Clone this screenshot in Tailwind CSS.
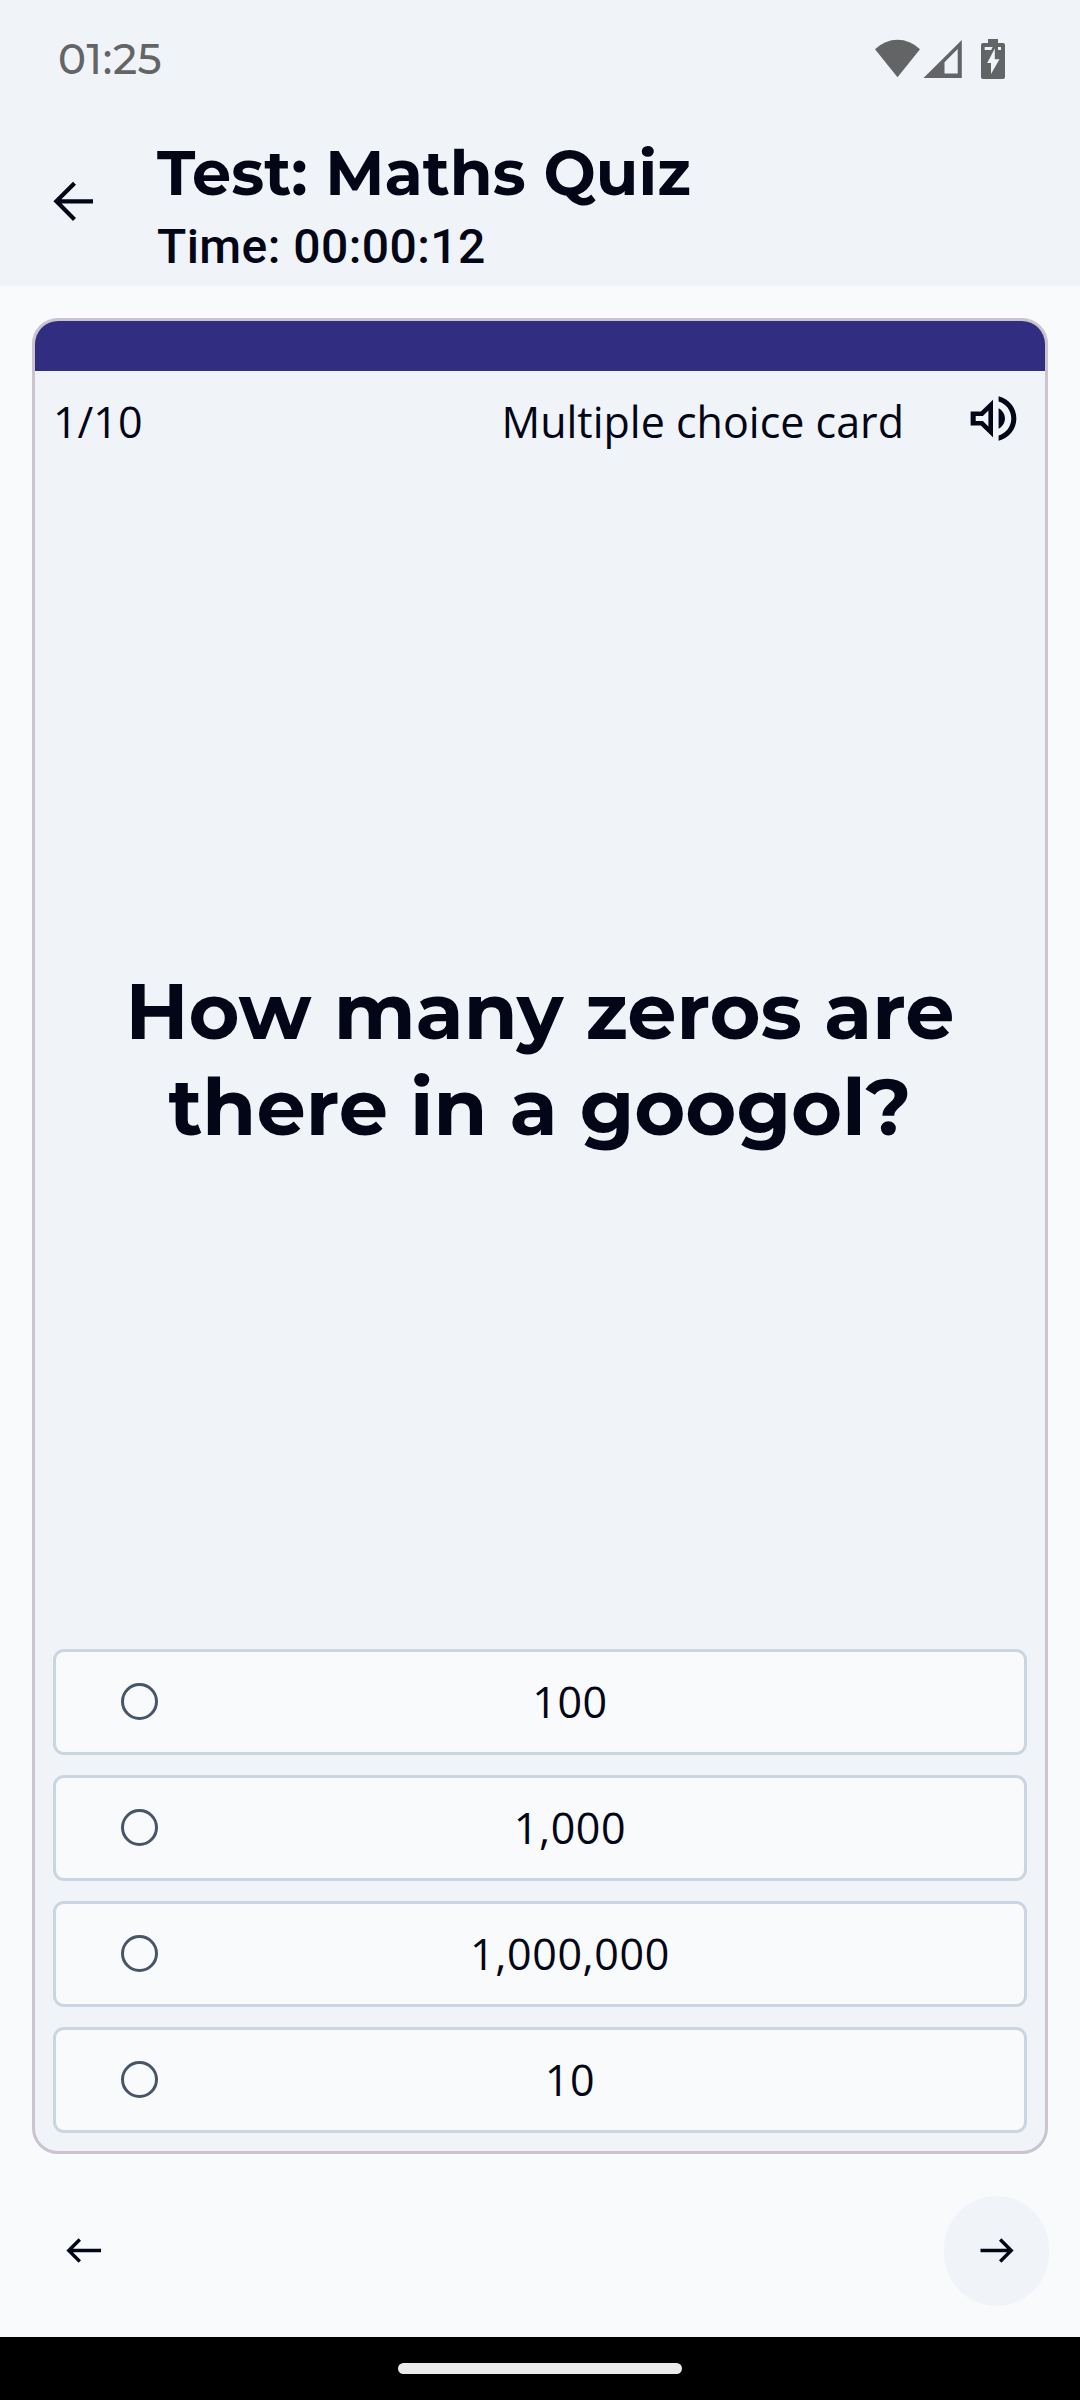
<!DOCTYPE html>
<html lang="en">
<head>
<meta charset="utf-8">
<title>Maths Quiz</title>
<script src="https://cdn.jsdelivr.net/npm/@tailwindcss/browser@4"></script>
</head>
<body class="w-[1080px] h-[2400px] flex flex-col overflow-hidden bg-[#f9fafc] text-[#020617] font-['Open_Sans','Noto_Sans',sans-serif]">
  <header class="h-[286px] shrink-0 bg-[#f0f4f9] flex flex-col">
    <div class="h-[118px] pl-[58px] pr-[73px] flex items-center justify-between text-[#636465]">
      <span class="font-['Montserrat','Roboto',sans-serif] font-medium text-[42px] leading-[50px] tracking-[0.6px]">01:25</span>
      <svg class="w-[134px] h-[48px]" viewBox="873 35 134 48" fill="currentColor">
        <path d="M875 49.300Q885 39.800 897.500 39.800T920 49.300L897.500 77.200Z"/>
        <path fill-rule="evenodd" d="M923.500 78L961.800 40V78ZM944.500 73.500H957.700V49L944.500 62.200Z"/>
        <path d="M988 39h10v4h5q2 0 2 2v32q0 2-2 2h-20q-2 0-2-2v-32q0-2 2-2h5z"/>
        <path fill="#f0f4f9" d="M984.700 47h8l-1.500 3h-6.500zM998 47h3v3h-3zM994.800 48.500V59.300H999.500L991 74V63H987.200Z"/>
      </svg>
    </div>
    <div class="flex-1 flex">
      <svg class="w-[157px] h-[166px] shrink-0" viewBox="0 118 157 166" fill="none" stroke="currentColor" stroke-width="4.200"><path d="M93 201.300H57M74.500 183.200L56.400 201.300L74.500 219.400"/></svg>
      <div class="pt-[16px]">
        <h1 class="font-['Montserrat','Inter',sans-serif] font-bold text-[62px] leading-[78px] tracking-[0.08px] whitespace-nowrap">Test: Maths Quiz</h1>
        <p class="font-['Roboto',sans-serif] font-medium text-[48px] leading-[69px] tracking-[0.44px]">Time: 00:00:12</p>
      </div>
    </div>
  </header>

  <main class="mx-8 mt-8 h-[1836px] shrink-0 rounded-[26px] border-3 border-[#c9c4d0] bg-[#f0f4f9] overflow-hidden flex flex-col">
    <div class="h-[50px] shrink-0 bg-[#312e81]"></div>
    <div class="h-[99px] shrink-0 pl-[18px] pr-[21px] flex items-center text-[43px] leading-[59px]">
      <span class="pt-[2px]">1/10</span>
      <span class="ml-auto mr-[59px] pt-[2px]">Multiple choice card</span>
      <svg class="w-[61px] h-[61px] -mt-[4px]" viewBox="0 0 24 24" fill="currentColor"><path d="M3 9.200v5.600h4l4.800 4.600V4.600L7 9.200H3zm7-.37v6.340L7.830 13H5v-2h2.830L10 8.830zM16.500 12c0-1.770-1.020-3.290-2.500-4.030v8.050c1.480-.73 2.500-2.250 2.500-4.020zM14 3.230v2.060c2.890.86 5 3.540 5 6.710s-2.110 5.850-5 6.710v2.060c4.010-.91 7-4.490 7-8.770 0-4.280-2.990-7.860-7-8.770z"/></svg>
    </div>
    <div class="flex-1 flex items-center justify-center text-center pb-[2px]">
      <h2 class="font-['Montserrat','Inter',sans-serif] font-bold text-[78px] leading-[96px]">How many zeros are<br>there in a googol?</h2>
    </div>
    <div class="px-[18px] pb-[18px] grid gap-[20px] text-[43px] leading-[59px] tracking-[0.6px]">
      <label class="h-[106px] border-3 border-[#cbd5e1] rounded-[11px] bg-[#f9fafc] flex items-center pl-[65px]"><span class="w-[37px] h-[37px] mb-px shrink-0 rounded-full border-3 border-[#475569]"></span><span class="flex-1 pl-[6px] pr-[48px] pb-[2px] text-center">100</span></label>
      <label class="h-[106px] border-3 border-[#cbd5e1] rounded-[11px] bg-[#f9fafc] flex items-center pl-[65px]"><span class="w-[37px] h-[37px] mb-px shrink-0 rounded-full border-3 border-[#475569]"></span><span class="flex-1 pl-[6px] pr-[48px] pb-[2px] text-center">1,000</span></label>
      <label class="h-[106px] border-3 border-[#cbd5e1] rounded-[11px] bg-[#f9fafc] flex items-center pl-[65px]"><span class="w-[37px] h-[37px] mb-px shrink-0 rounded-full border-3 border-[#475569]"></span><span class="flex-1 pl-[6px] pr-[48px] pb-[2px] text-center">1,000,000</span></label>
      <label class="h-[106px] border-3 border-[#cbd5e1] rounded-[11px] bg-[#f9fafc] flex items-center pl-[65px]"><span class="w-[37px] h-[37px] mb-px shrink-0 rounded-full border-3 border-[#475569]"></span><span class="flex-1 pl-[6px] pr-[48px] pb-[2px] text-center">10</span></label>
    </div>
  </main>

  <nav class="h-[183px] shrink-0 px-[31px] pt-[42px] flex justify-between">
    <button class="w-[105px] h-[110px] rounded-full flex items-center justify-center">
      <svg class="w-[36px] h-[28px]" viewBox="0 0 36 28" fill="none" stroke="currentColor" stroke-width="3.400"><path d="M35 13.500H4M13.800 2.500L2.800 13.500L13.800 24.500"/></svg>
    </button>
    <button class="w-[105px] h-[110px] rounded-full bg-[#f0f4f9] flex items-center justify-center">
      <svg class="w-[36px] h-[28px]" viewBox="0 0 36 28" fill="none" stroke="currentColor" stroke-width="3.400"><path d="M1.500 13.500H32M21.200 2.500L32.200 13.500L21.200 24.500"/></svg>
    </button>
  </nav>
  <footer class="h-[63px] shrink-0 bg-black flex items-center justify-center"><div class="w-[284px] h-[11px] rounded-full bg-[#ebebeb]"></div></footer>
</body>
</html>
